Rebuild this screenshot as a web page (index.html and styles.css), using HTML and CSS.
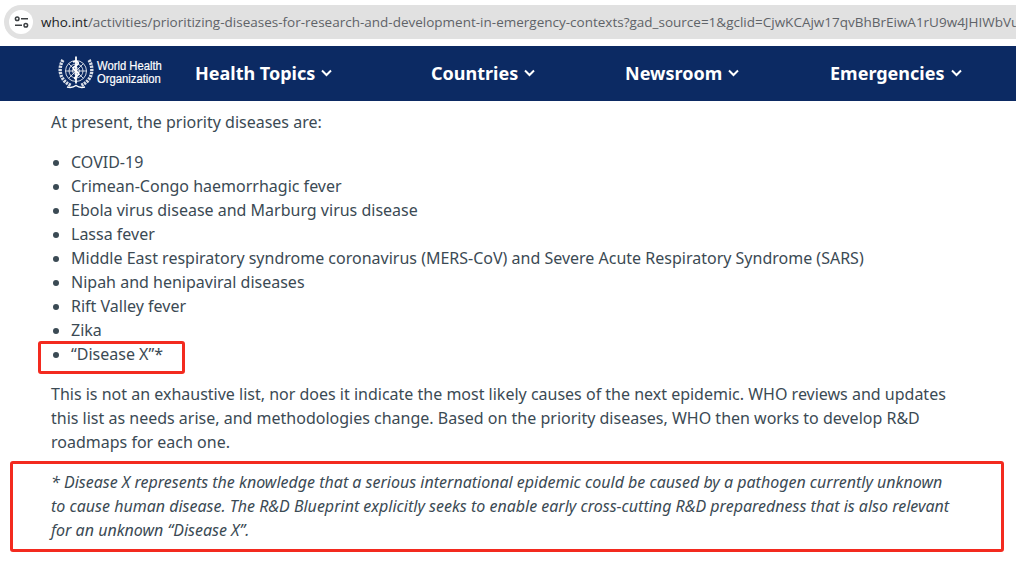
FILE: index.html
```html
<!DOCTYPE html>
<html lang="en">
<head>
<meta charset="utf-8">
<title>Prioritizing diseases for research and development in emergency contexts</title>
<link rel="stylesheet" href="styles.css">
</head>
<body>
<div class="browser">
  <div class="urlbar">
    <span class="tune">
      <svg width="15" height="12" viewBox="0 0 15 12" fill="none" stroke="#3c4043" stroke-width="1.500"><circle cx="3.200" cy="2.700" r="1.800"/><path d="M7 2.700h7"/><path d="M1 9.300h7"/><circle cx="11.800" cy="9.300" r="1.800"/></svg>
    </span>
    <span class="url"><span class="host">who.int</span>/activities/prioritizing-diseases-for-research-and-development-in-emergency-contexts?gad_source=1&amp;gclid=CjwKCAjw17qvBhBrEiwA1rU9w4JHIWbVu</span>
  </div>
</div>
<nav class="nav">
  <a class="logo">
    <svg class="emblem" width="36" height="33" viewBox="0 0 36 33" fill="none" stroke="#fff">
      <g stroke-width="0.900" opacity="0.900">
        <circle cx="18" cy="15" r="10.500"/>
        <circle cx="18" cy="15" r="7"/>
        <circle cx="18" cy="15" r="3.500"/>
        <path d="M7.500 15h21M10.600 7.600l14.800 14.800M25.400 7.600L10.600 22.400"/>
      </g>
      <path d="M18 0.500v27" stroke-width="1.800"/>
      <path d="M15 6c4-2 7 1 4 3s-6 3-2 5.500 5 3 2 5.500-3 2-1 3" stroke-width="1.700"/>
      <g stroke-width="3.400" stroke-dasharray="2.200 0.900" opacity="0.850">
        <path d="M5 4C0 12 1 24 13 29.500"/>
        <path d="M31 4c5 8 4 20-8 25.500"/>
      </g>
      <path d="M9 31c4 1 7 0 9-1.500 2 1.500 5 2.500 9 1.500" stroke-width="1.500"/>
    </svg>
    <span class="logotext">World Health<br>Organization</span>
  </a>
  <div class="menu">
    <a class="item">Health Topics <svg class="chev" width="11" height="8" viewBox="0 0 11 8" fill="none" stroke="#fff" stroke-width="2"><path d="M1 1.500l4.500 4.500 4.500-4.500"/></svg></a>
    <a class="item">Countries <svg class="chev" width="11" height="8" viewBox="0 0 11 8" fill="none" stroke="#fff" stroke-width="2"><path d="M1 1.500l4.500 4.500 4.500-4.500"/></svg></a>
    <a class="item">Newsroom <svg class="chev" width="11" height="8" viewBox="0 0 11 8" fill="none" stroke="#fff" stroke-width="2"><path d="M1 1.500l4.500 4.500 4.500-4.500"/></svg></a>
    <a class="item">Emergencies <svg class="chev" width="11" height="8" viewBox="0 0 11 8" fill="none" stroke="#fff" stroke-width="2"><path d="M1 1.500l4.500 4.500 4.500-4.500"/></svg></a>
  </div>
</nav>
<main class="content">
  <p class="intro">At present, the priority diseases are:</p>
  <ul class="list">
    <li>COVID-19</li>
    <li>Crimean-Congo haemorrhagic fever</li>
    <li>Ebola virus disease and Marburg virus disease</li>
    <li>Lassa fever</li>
    <li>Middle East respiratory syndrome coronavirus (MERS-CoV) and Severe Acute Respiratory Syndrome (SARS)</li>
    <li>Nipah and henipaviral diseases</li>
    <li>Rift Valley fever</li>
    <li>Zika</li>
    <li>“Disease X”*</li>
  </ul>
  <p class="para">This is not an exhaustive list, nor does it indicate the most likely causes of the next epidemic. WHO reviews and updates this list as needs arise, and methodologies change. Based on the priority diseases, WHO then works to develop R&amp;D roadmaps for each one.</p>
  <p class="note">* Disease X represents the knowledge that a serious international epidemic could be caused by a pathogen currently unknown to cause human disease. The R&amp;D Blueprint explicitly seeks to enable early cross-cutting R&amp;D preparedness that is also relevant for an unknown “Disease X”.</p>
</main>
<div class="mark mark-item"></div>
<div class="mark mark-note"></div>
</body>
</html>
```
FILE: styles.css
```css
html, body {
  margin: 0;
  padding: 0;
  height: 579px;
  overflow: hidden;
  background: #fff;
  font-family: "Noto Sans", "Open Sans", sans-serif;
}
.browser {
  padding: 5px 0 7px 4px;
}
.urlbar {
  display: flex;
  align-items: center;
  height: 34px;
  background: #e1e1e1;
  border-radius: 17px 0 0 17px;
  overflow: hidden;
  white-space: nowrap;
}
.tune {
  flex: none;
  display: flex;
  align-items: center;
  justify-content: center;
  width: 24px;
  height: 24px;
  margin-left: 5px;
  background: #fff;
  border-radius: 50%;
}
.url {
  margin-left: 8px;
  font-family: "Open Sans", "Noto Sans", sans-serif;
  font-size: 13.500px;
  color: #5f6368;
}
.host {
  color: #202124;
}
.nav {
  display: flex;
  align-items: center;
  height: 55px;
  background: #0c2a63;
  color: #fff;
}
.logo {
  display: flex;
  align-items: center;
  gap: 3px;
  padding-left: 58px;
  box-sizing: border-box;
  flex: none;
  width: 195px;
  margin-top: -2px;
}
.logotext {
  font-family: "Liberation Sans", sans-serif;
  font-size: 12.500px;
  line-height: 12.500px;
  font-weight: 400;
  white-space: nowrap;
  transform: scaleX(0.9);
  transform-origin: left center;
  -webkit-text-stroke: 0.2px #fff;
}
.menu {
  display: grid;
  grid-template-columns: 236px 194px 205px auto;
  margin-top: -2px;
}
.item {
  display: flex;
  align-items: center;
  gap: 6px;
  font-size: 18px;
  font-weight: 700;
  white-space: nowrap;
}
.chev {
  flex: none;
}
.content {
  padding: 9px 61px 0 51px;
  font-size: 16px;
  line-height: 24px;
  color: #3b4a54;
}
.intro, .para, .note {
  margin: 0;
}
.list {
  margin: 16px 0;
  padding-left: 20px;
}
.para {
  margin-bottom: 16px;
}
.note {
  font-style: italic;
}
.mark {
  position: absolute;
  box-sizing: border-box;
  border: 3px solid #f32a1f;
  border-radius: 3px;
}
.mark-item {
  left: 38px;
  top: 341px;
  width: 147px;
  height: 33px;
}
.mark-note {
  left: 10px;
  top: 461px;
  width: 994px;
  height: 91px;
}
```
